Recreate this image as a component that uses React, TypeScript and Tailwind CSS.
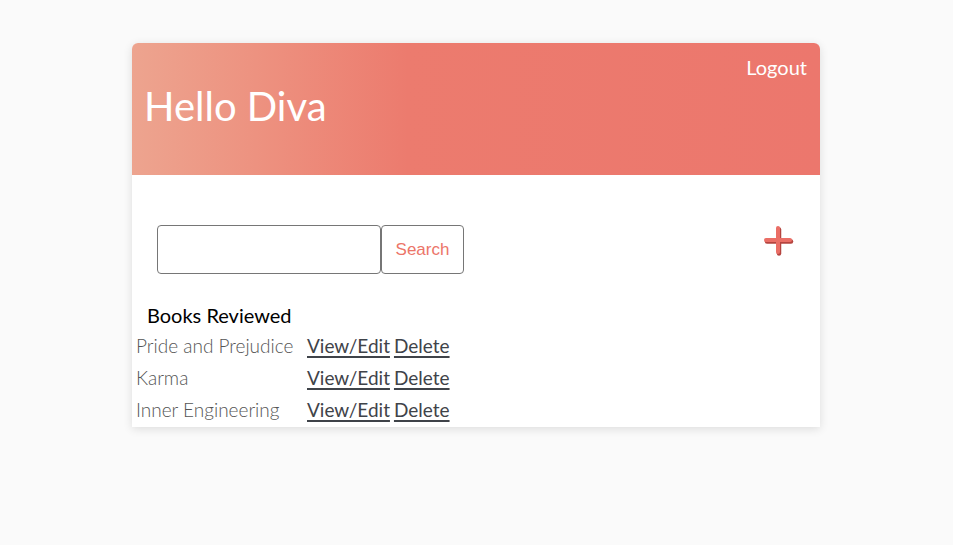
import React from "react";

const books = ["Pride and Prejudice", "Karma", "Inner Engineering"];

function PlusIcon() {
    return (
        <svg width="34" height="34" viewBox="0 0 34 34" aria-hidden="true">
            <g stroke="#b5443f" strokeWidth="4.5" strokeLinecap="round" transform="translate(1,1.5)">
                <line x1="16" y1="4" x2="16" y2="28" />
                <line x1="4" y1="16" x2="28" y2="16" />
            </g>
            <g stroke="#ea6e66" strokeWidth="4" strokeLinecap="round">
                <line x1="16" y1="4" x2="16" y2="28" />
                <line x1="4" y1="16" x2="28" y2="16" />
            </g>
        </svg>
    );
}

export default function App() {
    return (
        <main
            className="min-h-screen bg-[#fafafa] pt-[43px]"
            style={{ fontFamily: "Lato, 'Open Sans', sans-serif" }}
        >
            <div className="ml-[132px] w-[688px] bg-white rounded-t-md shadow-[0_2px_10px_rgba(0,0,0,0.12)]">
                <header className="h-[132px] rounded-t-md bg-gradient-to-r from-[#eda48f] via-[#ec7b6e] via-40% to-[#ec776d] flex flex-col px-[13px]">
                    <div className="flex justify-end pt-[12px]">
                        <button className="text-white text-[20px] leading-6">Logout</button>
                    </div>
                    <h1 className="text-white text-[40px] leading-[48px] mt-[3px] -ml-[1px]">Hello Diva</h1>
                </header>

                <div className="flex items-start justify-between pl-[25px] pr-[24px] pt-[50px]">
                    <div className="flex">
                        <input
                            type="text"
                            className="w-[224px] h-[49px] rounded border border-[#767676] outline-none px-2"
                        />
                        <button
                            className="h-[49px] w-[83px] rounded border border-[#767676] text-[#ec7569] text-[17px]"
                            style={{ fontFamily: "'Liberation Sans', Arial, sans-serif" }}
                        >
                            Search
                        </button>
                    </div>
                    <div className="-mt-[1px]">
                        <PlusIcon />
                    </div>
                </div>

                <h2 className="text-black text-[20px] leading-7 pl-[15px] mt-[27px]">Books Reviewed</h2>
                <table className="ml-[2px] border-separate border-spacing-[2px]">
                    <tbody>
                        {books.map((b) => (
                            <tr key={b} className="h-[30px]">
                                <td className="w-[169px] text-[#555] text-[19px] font-light whitespace-nowrap">{b}</td>
                                <td className="pr-[2px]">
                                    <a href="#" className="text-[#3f4349] text-[19px] underline decoration-2 underline-offset-[3px]">
                                        View/Edit
                                    </a>
                                </td>
                                <td>
                                    <a href="#" className="text-[#3f4349] text-[19px] underline decoration-2 underline-offset-[3px]">
                                        Delete
                                    </a>
                                </td>
                            </tr>
                        ))}
                    </tbody>
                </table>
            </div>
        </main>
    );
}
